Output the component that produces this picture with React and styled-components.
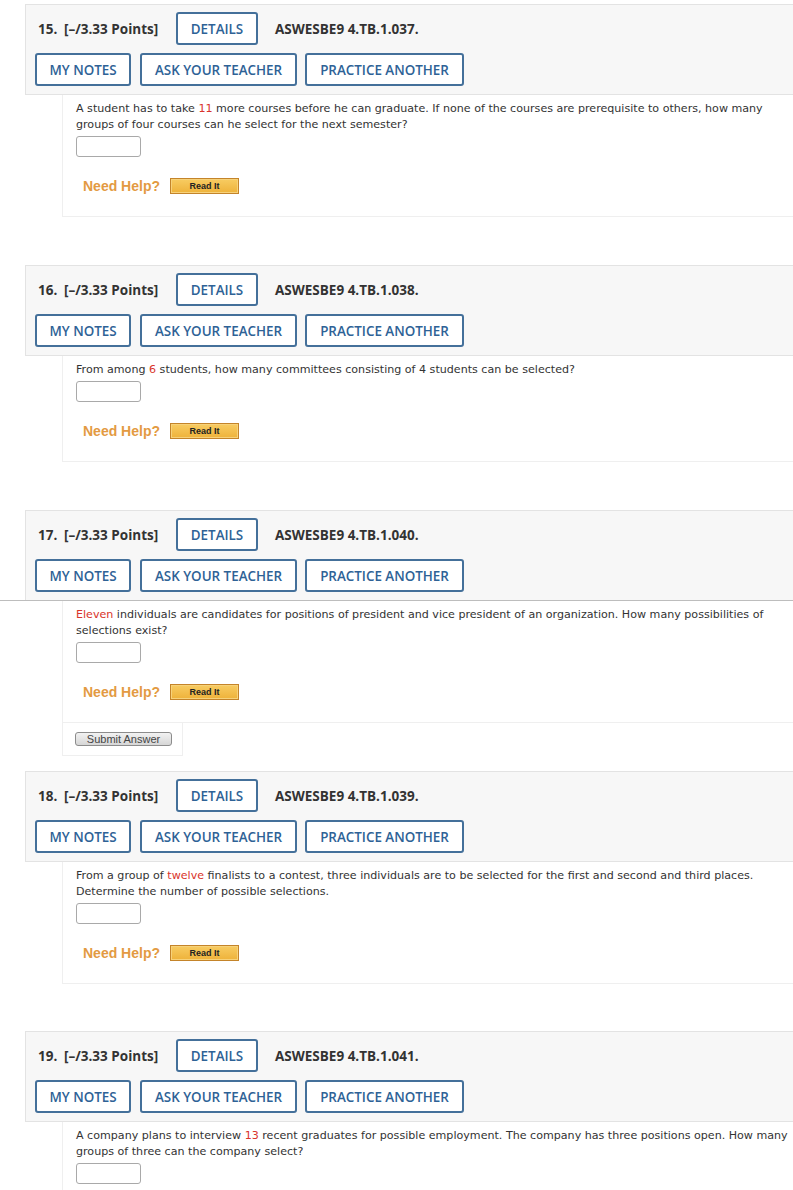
import React from "react";
import styled, { createGlobalStyle } from "styled-components";

const Global = createGlobalStyle`
  html, body { margin: 0; padding: 0; background: #fff; }
  body { font-family: "DejaVu Sans", Verdana, sans-serif; }
`;

const Page = styled.div`
  display: flex;
  flex-direction: column;
  padding-top: 4px;
  width: 793px;
  overflow: hidden;
`;

const Question = styled.section`
  display: flex;
  flex-direction: column;
  margin-bottom: ${(p) => p.$gap}px;
`;

const Header = styled.div`
  margin-left: 25px;
  background: #f7f7f7;
  border: 1px solid #e3e3e3;
  border-right: none;
  border-bottom: ${(p) => (p.$ruled ? "none" : "1px solid #e3e3e3")};
  padding: 7px 0 8px 9px;
  display: flex;
  flex-direction: column;
  gap: 8px;
  font-family: "Open Sans", "Noto Sans", sans-serif;
`;

const TitleRow = styled.div`
  display: flex;
  align-items: center;
  height: 33px;
  color: #333;
  font-weight: 700;
  font-size: 13.5px;
`;

const Num = styled.span`
  margin-left: 3px;
  width: 26px;
`;

const Points = styled.span`
  width: 112px;
`;

const Code = styled.span`
  margin-left: 17px;
`;

const Actions = styled.div`
  display: flex;
  gap: 8px;
`;

const OutlineButton = styled.button`
  box-sizing: border-box;
  height: 33px;
  width: ${(p) => p.$w}px;
  margin-right: ${(p) => p.$mr || 0}px;
  padding: 0;
  background: #fff;
  border: 2px solid #44709a;
  border-radius: 3px;
  color: #2e6296;
  font-family: "Open Sans", "Noto Sans", sans-serif;
  font-weight: 600;
  font-size: 13.4px;
  cursor: pointer;
`;

const Rule = styled.div`
  height: 1px;
  background: #bdbdbd;
`;

const Body = styled.div`
  margin-left: 62px;
  border: 1px solid #efefef;
  border-top: none;
  border-right: none;
  padding: 6px 0 22px 13px;
  display: flex;
  flex-direction: column;
  align-items: flex-start;
`;

const Prompt = styled.p`
  margin: 0;
  width: 712px;
  font-family: "DejaVu Sans", Verdana, sans-serif;
  font-size: 11.1px;
  line-height: 16px;
  color: #333;
`;

const Hi = styled.span`
  color: #d9342b;
`;

const Answer = styled.input`
  box-sizing: border-box;
  margin-top: 3px;
  width: 65px;
  height: 21px;
  border: 1px solid #a9a9a9;
  border-radius: 3px;
  background: #fff;
`;

const HelpRow = styled.div`
  display: flex;
  align-items: center;
  margin-top: 21px;
  margin-left: 7px;
  gap: 10px;
`;

const HelpLabel = styled.span`
  font-family: "Liberation Sans", Arial, sans-serif;
  font-weight: 700;
  font-size: 14px;
  color: #e39a42;
`;

const ReadIt = styled.button`
  box-sizing: border-box;
  width: 69px;
  height: 16px;
  padding: 0;
  background: linear-gradient(#f8cc62, #eeb23a);
  border: 1px solid #c4842a;
  box-shadow: inset 0 0 0 1px #f7d27a;
  font-family: "Liberation Sans", Arial, sans-serif;
  font-weight: 700;
  font-size: 9px;
  color: #222;
`;

const SubmitBox = styled.div`
  margin-left: 62px;
  width: 121px;
  height: 33px;
  box-sizing: border-box;
  border: 1px solid #efefef;
  border-top: none;
  display: flex;
  align-items: center;
  padding-left: 12px;
`;

const SubmitButton = styled.button`
  box-sizing: border-box;
  width: 97px;
  height: 14px;
  padding: 0;
  background: linear-gradient(#f2f2f2, #d6d6d6);
  border: 1px solid #8c8c8c;
  border-radius: 3px;
  font-family: "Liberation Sans", Arial, sans-serif;
  font-size: 11px;
  line-height: 12px;
  color: #444;
`;

const questions = [
  {
    n: 15,
    code: "ASWESBE9 4.TB.1.037.",
    text: (
      <>
        A student has to take <Hi>11</Hi> more courses before he can graduate. If none of the courses are prerequisite to others, how many groups of four courses can he select for the next semester?
      </>
    ),
    gap: 48,
  },
  {
    n: 16,
    code: "ASWESBE9 4.TB.1.038.",
    text: (
      <>
        From among <Hi>6</Hi> students, how many committees consisting of 4 students can be selected?
      </>
    ),
    gap: 48,
  },
  {
    n: 17,
    code: "ASWESBE9 4.TB.1.040.",
    text: (
      <>
        <Hi>Eleven</Hi> individuals are candidates for positions of president and vice president of an organization. How many possibilities of selections exist?
      </>
    ),
    ruled: true,
    submit: true,
    gap: 15,
  },
  {
    n: 18,
    code: "ASWESBE9 4.TB.1.039.",
    text: (
      <>
        From a group of <Hi>twelve</Hi> finalists to a contest, three individuals are to be selected for the first and second and third places. Determine the number of possible selections.
      </>
    ),
    gap: 47,
  },
  {
    n: 19,
    code: "ASWESBE9 4.TB.1.041.",
    text: (
      <>
        A company plans to interview <Hi>13</Hi> recent graduates for possible employment. The company has three positions open. How many groups of three can the company select?
      </>
    ),
    gap: 48,
    last: true,
  },
];

function QuestionBlock({ q }) {
  return (
    <Question $gap={q.gap}>
      <Header $ruled={q.ruled}>
        <TitleRow>
          <Num>{q.n}.</Num>
          <Points>[–/3.33 Points]</Points>
          <OutlineButton $w={82} type="button">DETAILS</OutlineButton>
          <Code>{q.code}</Code>
        </TitleRow>
        <Actions>
          <OutlineButton $w={96} $mr={1} type="button">MY NOTES</OutlineButton>
          <OutlineButton $w={157} type="button">ASK YOUR TEACHER</OutlineButton>
          <OutlineButton $w={159} type="button">PRACTICE ANOTHER</OutlineButton>
        </Actions>
      </Header>
      {q.ruled && <Rule />}
      <Body>
        <Prompt>{q.text}</Prompt>
        <Answer type="text" aria-label="answer" />
        {!q.last && (
          <HelpRow>
            <HelpLabel>Need Help?</HelpLabel>
            <ReadIt type="button">Read It</ReadIt>
          </HelpRow>
        )}
      </Body>
      {q.submit && (
        <SubmitBox>
          <SubmitButton type="button">Submit Answer</SubmitButton>
        </SubmitBox>
      )}
    </Question>
  );
}

export default function App() {
  return (
    <>
      <Global />
      <Page>
        {questions.map((q) => (
          <QuestionBlock key={q.n} q={q} />
        ))}
      </Page>
    </>
  );
}
